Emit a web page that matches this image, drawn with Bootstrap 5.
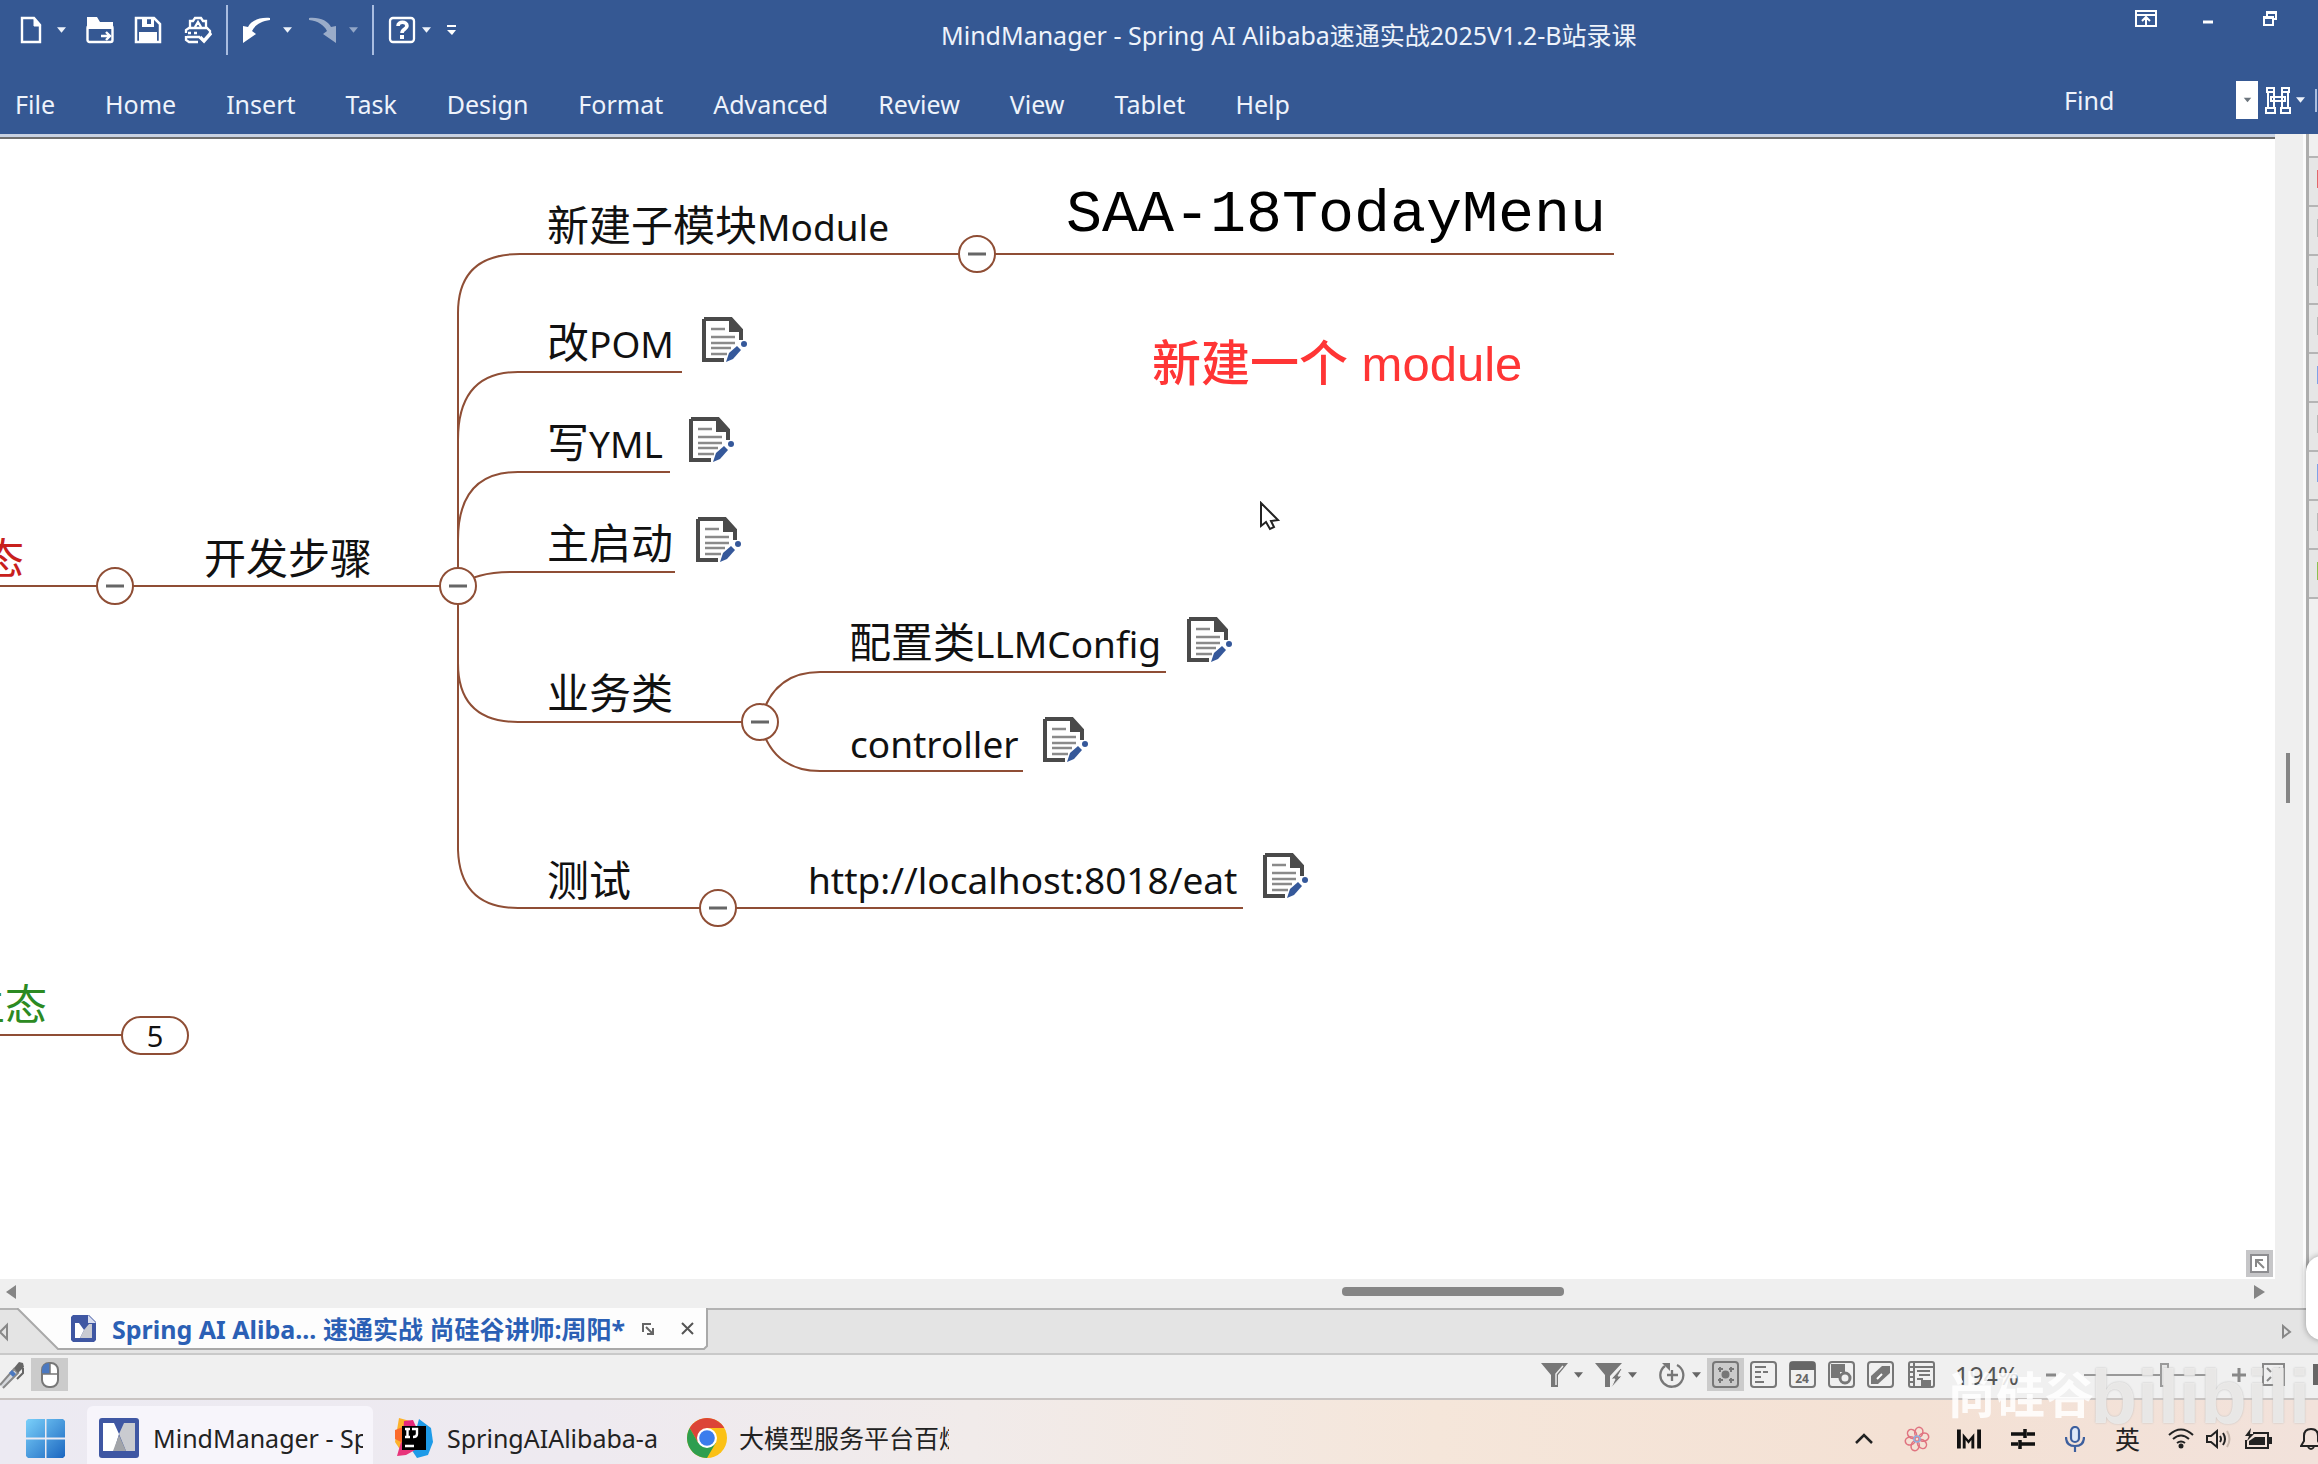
<!DOCTYPE html>
<html lang="zh-CN">
<head>
<meta charset="utf-8">
<meta name="viewport" content="width=device-width, initial-scale=1">
<title>MindManager - Spring AI Alibaba速通实战2025V1.2-B站录课</title>
<link href="https://cdn.jsdelivr.net/npm/bootstrap@5.3.0/dist/css/bootstrap.min.css" rel="stylesheet">
<style>
  :root { --ribbon: #355893; --branch: #8f4e35; }
  body { font-family: "Noto Sans", "Noto Sans CJK SC", sans-serif; font-size: 25px; line-height: 32px; color: #222; background: #f0f0f0; }
  svg { display: block; flex: none; }
  button { font: inherit; color: inherit; background: none; border: 0; padding: 0; }

  /* spacing steps between toolbar items */
  .s6 { margin-left: 6px; } .s12 { margin-left: 12px; } .s14 { margin-left: 14px; } .s16 { margin-left: 16px; }
  .s20 { margin-left: 20px; } .s22 { margin-left: 22px; } .s26 { margin-left: 26px; } .s28 { margin-left: 28px; }
  .s30 { margin-left: 30px; } .s44 { margin-left: 44px; } .s48 { margin-left: 48px; }

  .ribbon { background: var(--ribbon); color: #eef3fb; height: 134px; }
  .titlebar { height: 76px; }
  .quick { height: 60px; padding-left: 17px; }
  .quick button { display: flex; }
  .faded { opacity: .5; }
  .vline { width: 2px; height: 50px; background: #a9bde0; }
  .vline.short { height: 23px; margin: 0 1px 0 10px; }
  .doc-title { padding-top: 19px; padding-left: 485px; }
  .wincontrols { padding-top: 9px; padding-right: 40px; }
  .menubar { height: 56px; }
  .tabs { gap: 50px; padding-left: 15px; }
  .tabs a { color: #eef3fb; text-decoration: none; }
  .findbox { width: 172px; height: 38px; background: transparent; border: 0; color: #eef3fb; padding: 0; }
  .findbox::placeholder { color: #eef3fb; opacity: 1; }
  .finddrop { width: 22px; height: 38px; background: #fff; }

  .work { height: 1174px; }
  .canvas { background: #fff; border-top: 2px solid #6f6f6f; box-shadow: 0 -3px 0 #c9d2e2; margin-top: 3px; }
  .vscroll { width: 28px; background: #efefef; }
  .vthumb { width: 4px; height: 50px; background: #858585; margin: 619px 0 0 11px; }
  .gutter { width: 3px; background: #fbfbfb; }
  .panel-side { width: 12px; border-left: 3px solid #adadad; background: #f0f0f0; padding-top: 22px; }
  .panel-side button { display: block; width: 9px; height: 49px; border-top: 2px solid #b5b5b5; background: #e6e6e6; position: relative; }
  .panel-side button:last-child { border-bottom: 2px solid #b5b5b5; height: 51px; }
  .panel-side button::after { content: ""; position: absolute; right: 0; top: 12px; width: 1px; height: 18px; background: #b9b9b9; }
  .panel-side .c-red::after { background: #e2686a; }
  .panel-side .c-blue::after { background: #7fa3e6; }
  .panel-side .c-green::after { background: #8cc152; }
  .drawer-tab { position: absolute; right: -20px; top: 1256px; width: 32px; height: 84px; border-radius: 16px; background: #fff; box-shadow: 0 0 6px rgba(0,0,0,.35); }
  .hscroll { height: 29px; background: #efefef; padding: 0 38px 4px 6px; }
  .hthumb { height: 9px; width: 222px; border-radius: 4px; background: #868686; margin-left: 1326px; }

  .topic { position: absolute; height: 50px; line-height: 50px; font-size: 37px; white-space: nowrap; color: #111; }
  .topic .zh { font-size: 42px; }
  .code-topic { font-family: "Liberation Mono", monospace; font-size: 60px; color: #000; height: 70px; line-height: 70px; }
  .callout-text { font-family: "Liberation Sans", "Noto Sans CJK SC", sans-serif; font-size: 49px; font-weight: 500; color: #ff3535; height: 60px; line-height: 60px; }
  .note { position: absolute; width: 46px; height: 46px; }
  .count { position: absolute; width: 68px; height: 39px; border: 2px solid var(--branch); border-radius: 20px; background: #fff; font-size: 29px; line-height: 32px; text-align: center; color: #111; left: 121px; top: 877px; }
  .red { color: #c8201c; } .green { color: #2c8a22; }
  .t-module { left: 547px; top: 61px; } .t-saa { left: 1066px; top: 41px; }
  .t-pom { left: 547px; top: 178px; } .t-yml { left: 547px; top: 278px; } .t-main { left: 547px; top: 379px; }
  .t-steps { left: 204px; top: 394px; } .t-state { left: -18px; top: 394px; }
  .t-biz { left: 547px; top: 529px; } .t-config { left: 849px; top: 478px; } .t-ctrl { left: 850px; top: 580px; }
  .t-test { left: 547px; top: 716px; } .t-url { left: 808px; top: 716px; } .t-eco { left: -37px; top: 840px; }
  .t-callout { left: 1152px; top: 195px; }
  .n-pom { left: 702px; top: 178px; } .n-yml { left: 689px; top: 278px; } .n-main { left: 696px; top: 378px; }
  .n-config { left: 1187px; top: 478px; } .n-ctrl { left: 1043px; top: 578px; } .n-url { left: 1263px; top: 714px; }
  .pointer { position: absolute; left: 1259px; top: 362px; }
  .overview { position: absolute; right: 2px; bottom: 2px; }

  .doctabs { height: 47px; background: #e4e4e4; border-top: 2px solid #b3b3b3; border-bottom: 2px solid #c9c9c9; }
  .doctab { width: 690px; height: 41px; position: relative; margin-top: -2px; padding-left: 54px; color: #2b60b5; }
  .doctab > * { position: relative; }
  .doctab .tabshape { position: absolute; left: 0; top: 0; }
  .doctab strong { width: 529px; }
  .tab-next { margin-right: 26px; }

  .status { height: 45px; background: #f0f0f0; border-bottom: 2px solid #c9c4c2; }
  .status-tools { color: #666; }
  .tool-on { width: 37px; height: 33px; background: #cbcbcb; }
  .zoomval { width: 71px; color: #555; }
  .edge-tool { width: 5px; height: 21px; background: #666; }
  .zoomrange { width: 126px; height: 24px; appearance: none; background: linear-gradient(#999,#999) center/100% 2px no-repeat; }
  .zoomrange::-webkit-slider-thumb { appearance: none; width: 9px; height: 24px; background: #e8e8e8; border: 2px solid #9a9a9a; }

  .taskbar { height: 64px; background: linear-gradient(90deg, #eceaf2 0%, #eeeaf0 25%, #f1ebea 42%, #f5e6da 62%, #f4e1d4 82%, #f2e2db 100%); padding-left: 26px; }
  .start { margin-top: 13px; }
  .task { height: 58px; margin-top: 6px; padding-top: 6px; }
  .task span { width: 210px; overflow: hidden; white-space: nowrap; text-align: left; }
  .task.active { width: 286px; padding-left: 12px; background: #f7f5fb; border-radius: 6px 6px 0 0; }
  .tray { padding-top: 13px; }
  .bell { width: 18px; overflow: hidden; }
  .wm { position: absolute; font-weight: 700; pointer-events: none; white-space: nowrap; }
  .wm-school { right: 224px; bottom: 40px; font-size: 49px; line-height: 60px; color: rgba(255,255,255,.85); }
  .wm-site { right: 8px; bottom: 25px; font: 700 76px/84px "Liberation Sans", sans-serif; color: rgba(240,239,237,.85); text-shadow: 0 0 2px #bbb; }
</style>
<script src="https://cdn.jsdelivr.net/npm/bootstrap@5.3.0/dist/js/bootstrap.bundle.min.js"></script>
</head>
<body class="overflow-hidden position-relative">
<svg width="0" height="0" class="position-absolute" aria-hidden="true">
  <defs>
    <symbol id="caret" viewBox="0 0 10 8"><path d="M0 1h10L5 7z" fill="currentColor"/></symbol>
    <symbol id="noteicon" viewBox="0 0 46 46">
      <path d="M2 2h27l10 11v10M22 43H2V2" fill="none" stroke="#4a4a4a" stroke-width="4"/>
      <path d="M27 2v13h13z" fill="#4a4a4a"/>
      <path d="M9 12h14M9 20h24M9 26h24M9 31h20M9 37h16" stroke="#8a8a8a" stroke-width="2.6"/>
      <path d="M24 45l3-9 8-7 4 4-8 9z" fill="#35589a"/><circle cx="42" cy="27" r="3" fill="#35589a"/>
    </symbol>
  </defs>
</svg>

<header class="ribbon">
  <div class="titlebar d-flex">
    <div class="quick d-flex align-items-center">
      <button aria-label="New"><svg width="28" height="28" viewBox="0 0 28 28" fill="none" stroke="#fff" stroke-width="2.4"><path d="M5 2h12l6 7v17H5z"/><path d="M17 2v8h7z" fill="#fff" stroke-width="1"/></svg></button>
      <button aria-label="New options" class="s12"><svg width="9" height="8"><use href="#caret"/></svg></button>
      <button aria-label="Open" class="s20"><svg width="28" height="28" viewBox="0 0 28 28"><path d="M1 1h10l3 5h13v7H1z" fill="#fff"/><rect x="1.5" y="10" width="25" height="16" rx="2" fill="none" stroke="#fff" stroke-width="2.4"/><path d="M15 20h9M20 16l4 4-4 4" fill="none" stroke="#fff" stroke-width="2.4"/></svg></button>
      <button aria-label="Save" class="s20"><svg width="28" height="28" viewBox="0 0 28 28"><path d="M2 2h18l6 6v18H2z" fill="none" stroke="#fff" stroke-width="2.5"/><path d="M8 2h5v6h4V2h3v9H8zM5 16h18v9H5z" fill="#fff"/></svg></button>
      <button aria-label="Print" class="s22"><svg width="28" height="28" viewBox="0 0 28 28" fill="none" stroke="#fff" stroke-width="2.3"><path d="M6 12V5h3l2-3h6l2 3h3v7M11 11l3-5 3 5M2 17v-3l3-2h18l3 3v2M2 20v4l3 2h9M4 17h3M10 17h3M3 21h13"/><path d="M16 21l4 4 7-8" stroke-width="3.5"/></svg></button>
      <span class="vline s14"></span>
      <button aria-label="Undo" class="s14"><svg width="29" height="28" viewBox="0 0 29 28"><path d="M28 2C17 1 9 5 6 11L1 10v17l13-9-4-3C13 9 19 5 28 4z" fill="#fff"/></svg></button>
      <button aria-label="Undo options" class="s12"><svg width="9" height="8"><use href="#caret"/></svg></button>
      <button aria-label="Redo" class="s16 faded"><svg width="29" height="28" viewBox="0 0 29 28"><path d="M1 2c11-1 19 3 22 9l5-1v17l-13-9 4-3C16 9 10 5 1 4z" fill="#fff"/></svg></button>
      <button aria-label="Redo options" class="s12 faded"><svg width="9" height="8"><use href="#caret"/></svg></button>
      <span class="vline s14"></span>
      <button aria-label="Help" class="s14"><svg width="28" height="28" viewBox="0 0 28 28"><rect x="2" y="2" width="24" height="24" rx="3" fill="none" stroke="#fff" stroke-width="2.3"/><path d="M10 10c0-5 9-5 9 0 0 3-5 3-5 7" fill="none" stroke="#fff" stroke-width="3.6"/><rect x="12" y="19" width="4" height="4" fill="#fff"/></svg></button>
      <button aria-label="Help options" class="s6"><svg width="9" height="8"><use href="#caret"/></svg></button>
      <button aria-label="Customize toolbar" class="s16"><svg width="9" height="12" viewBox="0 0 9 12" fill="#fff"><path d="M0 1h9v2H0zM0 6h9l-4 5z"/></svg></button>
    </div>
    <div class="doc-title text-nowrap">MindManager - Spring AI Alibaba速通实战2025V1.2-B站录课</div>
    <div class="wincontrols d-flex ms-auto align-items-start">
      <button aria-label="Ribbon display"><svg width="24" height="20" viewBox="0 0 24 20" fill="none" stroke="#fff" stroke-width="2"><path d="M2 2h20v15H2zM2 6h20M12 16V8M8 12l4-4 4 4"/></svg></button>
      <button aria-label="Minimize" class="s44"><svg width="12" height="20"><path d="M1 13h10" stroke="#fff" stroke-width="3"/></svg></button>
      <button aria-label="Restore" class="s48"><svg width="16" height="20" viewBox="0 0 16 20" fill="none" stroke="#fff" stroke-width="2"><path d="M2 8h9v8H2zM2 9h9M5 8V3h9v7h-3M5 4h9"/></svg></button>
    </div>
  </div>
  <nav class="menubar d-flex align-items-center justify-content-between">
    <div class="tabs d-flex">
      <a href="#">File</a><a href="#">Home</a><a href="#">Insert</a><a href="#">Task</a><a href="#">Design</a><a href="#">Format</a><a href="#">Advanced</a><a href="#">Review</a><a href="#">View</a><a href="#">Tablet</a><a href="#">Help</a>
    </div>
    <div class="d-flex align-items-center pb-2">
      <input class="findbox" type="text" placeholder="Find" aria-label="Find">
      <button class="finddrop d-flex align-items-center justify-content-center text-secondary" aria-label="Find history"><svg width="9" height="6"><use href="#caret"/></svg></button>
      <button aria-label="Search" class="s6"><svg width="28" height="28" viewBox="0 0 28 28" fill="none" stroke="#fff" stroke-width="2"><path d="M3 2h7v4H3zM18 2h7v4h-7zM4 7v14M10 7v14M18 7v14M24 7v14M2 22h9v5H2zM17 22h9v5h-9zM7 11h14v4H7z"/></svg></button>
      <button aria-label="Search options" class="ms-1"><svg width="9" height="8"><use href="#caret"/></svg></button>
      <span class="vline short"></span>
    </div>
  </nav>
</header>

<div class="work d-flex">
  <div class="d-flex flex-column flex-grow-1">
    <div class="d-flex flex-grow-1">
      <main class="canvas position-relative flex-grow-1 overflow-hidden">
        <svg class="position-absolute top-0 start-0" width="1700" height="1139" viewBox="0 139 1700 1139" fill="none" stroke="#8f4e35" stroke-width="2">
          <path d="M0 586H458M458 586V313Q458 254 520 254H1614M458 440Q458 372 518 372H682M458 540Q458 472 518 472H670M458 586Q476 572 512 572H675M458 586V663Q458 722 518 722H760M458 650V850Q460 908 518 908H718M760 722Q772 672 820 672H1166M760 722Q772 771 820 771H1023M718 908H1243M0 1035H122"/>
          <g fill="#fff"><circle cx="977" cy="254" r="18"/><circle cx="115" cy="586" r="18"/><circle cx="458" cy="586" r="18"/><circle cx="760" cy="722" r="18"/><circle cx="718" cy="908" r="18"/></g>
          <path stroke="#666" stroke-width="3" d="M968 254h18M106 586h18M449 586h18M751 722h18M709 908h18"/>
        </svg>
        <div class="topic t-module"><span class="zh">新建子模块</span>Module</div>
        <div class="topic code-topic t-saa">SAA-18TodayMenu</div>
        <div class="topic t-pom"><span class="zh">改</span>POM</div>
        <div class="topic t-yml"><span class="zh">写</span>YML</div>
        <div class="topic t-main"><span class="zh">主启动</span></div>
        <div class="topic t-steps"><span class="zh">开发步骤</span></div>
        <div class="topic t-state red"><span class="zh">态</span></div>
        <div class="topic t-biz"><span class="zh">业务类</span></div>
        <div class="topic t-config"><span class="zh">配置类</span>LLMConfig</div>
        <div class="topic t-ctrl">controller</div>
        <div class="topic t-test"><span class="zh">测试</span></div>
        <div class="topic t-url">http://localhost:8018/eat</div>
        <div class="topic t-eco green"><span class="zh">生态</span></div>
        <button class="count">5</button>
        <div class="topic callout-text t-callout">新建一个 module</div>
        <svg class="note n-pom"><use href="#noteicon"/></svg>
        <svg class="note n-yml"><use href="#noteicon"/></svg>
        <svg class="note n-main"><use href="#noteicon"/></svg>
        <svg class="note n-config"><use href="#noteicon"/></svg>
        <svg class="note n-ctrl"><use href="#noteicon"/></svg>
        <svg class="note n-url"><use href="#noteicon"/></svg>
        <svg class="pointer" width="22" height="32" viewBox="0 0 22 32"><path d="M2 2v23l5-4 4 7 4-2-3-6 7-1z" fill="#fff" stroke="#222" stroke-width="2"/></svg>
        <button class="overview" aria-label="Overview"><svg width="27" height="27" viewBox="0 0 27 27" fill="none"><path d="M0 0h27v27H0z" fill="#c6c6c8"/><path d="M5 5h17v17H5z" fill="#fff" stroke="#8d8d90" stroke-width="2"/><path d="M10 17v-7h7M10 10l8 8" stroke="#888" stroke-width="2"/></svg></button>
      </main>
      <div class="vscroll"><div class="vthumb"></div></div>
    </div>
    <div class="hscroll d-flex align-items-center">
      <svg width="10" height="14"><path d="M10 0v14L0 7z" fill="#858585"/></svg>
      <div class="hthumb"></div>
      <svg class="ms-auto" width="11" height="14"><path d="M0 0v14l11-7z" fill="#858585"/></svg>
    </div>
  </div>
  <div class="gutter"></div>
  <aside class="panel-side">
    <button class="c-red" aria-label="Panel 1"></button><button aria-label="Panel 2"></button><button aria-label="Panel 3"></button><button aria-label="Panel 4"></button><button class="c-blue" aria-label="Panel 5"></button><button aria-label="Panel 6"></button><button class="c-blue" aria-label="Panel 7"></button><button aria-label="Panel 8"></button><button class="c-green" aria-label="Panel 9"></button>
  </aside>
</div>

<div class="doctabs d-flex">
  <svg width="17" height="43" fill="none" stroke="#888" stroke-width="2"><path d="M7 15v14L0 22z"/></svg>
  <div class="doctab d-flex align-items-center">
    <svg class="tabshape" width="692" height="43"><path d="M0 0H690V38L687 41H41Z" fill="#fdfdfd"/><path d="M0 0L41 41H687L690 38V0" fill="none" stroke="#a9a9a9" stroke-width="2"/></svg>
    <svg width="25" height="27" viewBox="0 0 25 27"><path d="M2 0h16l7 7v18l-2 2H2l-2-2V2z" fill="#3f57a3"/><path d="M17 0v8h8z" fill="#d9def0"/><path d="M4 8h4l5 7-4 8H4z" fill="#fff"/><path d="M21 9h-3l-5 6-4 8h12z" fill="#c9cbd2"/></svg>
    <strong class="text-nowrap s16">Spring AI Aliba... 速通实战 尚硅谷讲师:周阳*</strong>
    <button aria-label="Float"><svg width="14" height="14" fill="none" stroke="#666" stroke-width="2"><path d="M2 10V2h8M5 5l7 7M12 6v6H6"/></svg></button>
    <button aria-label="Close" class="s26"><svg width="13" height="13" stroke="#555" stroke-width="2"><path d="M1 1l11 11M12 1L1 12"/></svg></button>
  </div>
  <svg class="tab-next ms-auto align-self-center" width="10" height="15" fill="none" stroke="#888" stroke-width="2"><path d="M1 2v11l7-5z"/></svg>
</div>

<div class="status d-flex align-items-center pb-1">
  <svg width="25" height="28" viewBox="0 0 25 28"><path d="M0 24L14 8l4 4L3 27" fill="#d5d8dc" stroke="#888" stroke-width="2"/><path d="M14 7l5-6 4 1 1 4-6 6z" fill="#666"/><path d="M9 12l3-3 4 4-3 3z" fill="#4a78c0"/><path d="M23 7v5l-6 6" fill="none" stroke="#666" stroke-width="2"/></svg>
  <button class="tool-on d-flex justify-content-center align-items-center s6" aria-label="Pointer mode"><svg width="18" height="26" viewBox="0 0 18 26"><rect x="1" y="1" width="16" height="24" rx="7" fill="#fff" stroke="#777" stroke-width="2"/><path d="M9 1v11H1V8q0-7 8-7z" fill="#4a78c0"/><path d="M9 1v11M1 12h16" stroke="#777" stroke-width="1.5"/></svg></button>
  <div class="status-tools d-flex align-items-center ms-auto">
    <button aria-label="Filter"><svg width="27" height="26" viewBox="0 0 27 26"><path d="M0 1h27L17 13v12h-7V13z" fill="#777"/><path d="M22 4l-7 8v11" stroke="#eee" stroke-width="1.5" fill="none"/></svg></button>
    <button aria-label="Filter options" class="s6"><svg width="9" height="8"><use href="#caret"/></svg></button>
    <button aria-label="Power filter" class="s12"><svg width="27" height="26" viewBox="0 0 27 26"><path d="M0 1h27L15 14v11h-5V13z" fill="#777"/><path d="M26 6L16 17h4l-4 9 11-12h-4l4-7z" fill="#777" stroke="#f0f0f0"/></svg></button>
    <button aria-label="Power filter options" class="s6"><svg width="9" height="8"><use href="#caret"/></svg></button>
    <button aria-label="Refresh" class="s22"><svg width="27" height="28" viewBox="0 0 27 28" fill="none" stroke="#777" stroke-width="2.3"><path d="M6 5a11.500 11.500 0 1 0 12-1M13 9v11M8 14h11"/><path d="M3 2h8v8z" fill="#777" stroke="none"/></svg></button>
    <button aria-label="Refresh options" class="s6"><svg width="9" height="8"><use href="#caret"/></svg></button>
    <button class="tool-on d-flex justify-content-center align-items-center s6" aria-label="Map view"><svg width="27" height="27" viewBox="0 0 27 27" fill="none" stroke="#777" stroke-width="2"><rect x="1" y="1" width="25" height="25" rx="3"/><circle cx="13.5" cy="13.5" r="3" fill="#777"/><path d="M6 8h5M8 6v5M17 8h5M19 6v5M6 19h5M8 17v5M17 19h5M19 17v5"/></svg></button>
    <button aria-label="Outline view" class="s6"><svg width="27" height="27" viewBox="0 0 27 27" fill="none" stroke="#777" stroke-width="2"><rect x="1" y="1" width="25" height="25" rx="3"/><path d="M5 6h11M5 11h6M13 11h5M5 16h6M5 21h9"/></svg></button>
    <button aria-label="Schedule view" class="s12"><svg width="27" height="27" viewBox="0 0 27 27"><rect x="1" y="1" width="25" height="25" rx="3" fill="none" stroke="#777" stroke-width="2"/><path d="M1 1h25v8H1z" fill="#666"/><text x="13" y="22" font-size="12" font-weight="700" text-anchor="middle" fill="#666">24</text></svg></button>
    <button aria-label="Icon view" class="s12"><svg width="27" height="27" viewBox="0 0 27 27" fill="none" stroke="#777" stroke-width="2"><rect x="1" y="1" width="25" height="25" rx="3"/><path d="M4 4h12v6h-5v6H4z" fill="#777"/><circle cx="17" cy="17" r="5" stroke-width="3"/></svg></button>
    <button aria-label="Tag view" class="s12"><svg width="27" height="27" viewBox="0 0 27 27"><rect x="1" y="1" width="25" height="25" rx="3" fill="none" stroke="#777" stroke-width="2"/><path d="M4 15L15 5h8v7L11 23H4z" fill="#777"/><path d="M10 18l5-5" stroke="#fff" stroke-width="2"/></svg></button>
    <button aria-label="Gantt view" class="s14"><svg width="27" height="27" viewBox="0 0 27 27" fill="none" stroke="#777" stroke-width="2"><rect x="1" y="1" width="25" height="25" rx="2"/><path d="M1 6h25M6 1v25M9 10h13M11 14h11M9 18h6M1 11h5M1 16h5M1 21h5"/><path d="M14 25v-5h8v5z" fill="#777"/></svg></button>
    <span class="zoomval s20">194%</span>
    <button aria-label="Zoom out" class="s20"><svg width="10" height="4"><path d="M0 2h10" stroke="#888" stroke-width="3"/></svg></button>
    <input class="zoomrange s28" type="range" aria-label="Zoom" min="0" max="300" value="194">
    <button aria-label="Zoom in" class="s22"><svg width="14" height="14"><path d="M0 7h14M7 0v14" stroke="#888" stroke-width="3"/></svg></button>
    <button aria-label="Fit map" class="s16"><svg width="23" height="23" viewBox="0 0 23 23" fill="none" stroke="#888" stroke-width="2"><path d="M1 1h21v21H1zM5 5l4 4M18 5l-4 4M5 18l4-4M18 18l-4-4"/></svg></button>
    <span class="edge-tool s28"></span>
  </div>
</div>

<footer class="taskbar d-flex position-relative">
  <button class="start" aria-label="Start"><svg width="39" height="39" viewBox="0 0 39 39"><defs><linearGradient id="w" x2="1" y2="1"><stop stop-color="#7ad0fa"/><stop offset="1" stop-color="#1b66c0"/></linearGradient></defs><path fill="url(#w)" d="M2 0h17v18.500H0V2zM20.500 0H37l2 2v16.500H20.500zM0 20.500h19V39H2l-2-2zM20.500 20.500H39V37l-2 2H20.500z"/></svg></button>
  <button class="task active d-flex align-items-center s22"><svg width="40" height="40" viewBox="0 0 40 40"><rect width="40" height="40" rx="3" fill="#3f57a3"/><path d="M4 5h11l5 11-5 17H4z" fill="#fff"/><path d="M36 5H25l-5 11 7 17h9z" fill="#c9cbd0"/><path d="M20 17l7 16H14z" fill="#a2a4a8"/></svg><span class="s14">MindManager - Sp</span></button>
  <button class="task d-flex align-items-center s22"><svg width="38" height="40" viewBox="0 0 38 40"><path d="M4 0l11 3 5 17L6 33 0 24z" fill="#fdb22b"/><path d="M0 12l8-3v16l-8-4z" fill="#fb6a2b"/><path d="M9 3l9-1 4 9-14 6z" fill="#e5287b"/><path d="M24 1l12 9 2 14-5 13-11 3-6-9z" fill="#1e9be8"/><path d="M2 38l4-14 14 8-9 5z" fill="#e8347a"/><rect x="7" y="8" width="24" height="24" fill="#000"/><path d="M10 11h5M12.500 11v8M10 19h5M17 11h5v5q0 3-4 3M10 28h9" stroke="#fff" stroke-width="2.400" fill="none"/></svg><span class="s14">SpringAIAlibaba-atguigu</span></button>
  <button class="task d-flex align-items-center s30"><svg width="40" height="40" viewBox="0 0 40 40"><circle cx="20" cy="20" r="20" fill="#fbc116"/><path d="M2.700 10A20 20 0 0 1 37.300 10H20L11.300 25z" fill="#dc4437"/><path d="M2.700 10A20 20 0 0 0 20 40l8.700-15H11.300z" fill="#2e9e4f"/><circle cx="20" cy="20" r="10" fill="#fff"/><circle cx="20" cy="20" r="7.800" fill="#3b7ded"/></svg><span class="s12">大模型服务平台百炼控制台</span></button>
  <div class="tray d-flex align-items-center ms-auto">
    <button aria-label="Show hidden icons"><svg width="18" height="12" fill="none" stroke="#222" stroke-width="2.5"><path d="M1 10l8-8 8 8"/></svg></button>
    <button aria-label="Assistant" class="s30"><svg width="28" height="26" viewBox="-14 -13 28 26" fill="none" stroke="#e07480" stroke-width="1.6"><ellipse cx="0" cy="-7" rx="4" ry="5" transform="rotate(15)"/><ellipse cx="0" cy="-7" rx="4" ry="5" transform="rotate(75)"/><ellipse cx="0" cy="-7" rx="4" ry="5" transform="rotate(135)"/><ellipse cx="0" cy="-7" rx="4" ry="5" transform="rotate(195)"/><ellipse cx="0" cy="-7" rx="4" ry="5" transform="rotate(255)"/><ellipse cx="0" cy="-7" rx="4" ry="5" transform="rotate(315)"/><circle r="3" stroke="#8fb0e0"/></svg></button>
    <button aria-label="Monitor" class="s26"><svg width="24" height="20" viewBox="0 0 25 20"><path d="M0 0h4v20H0zM6 20V4l6 7 6-7v16h-3v-9l-3 4-3-4v9zM21 0h4v20h-4z" fill="#111"/></svg></button>
    <button aria-label="Settings" class="s30"><svg width="24" height="20" viewBox="0 0 24 20" stroke="#111" stroke-width="3.5"><path d="M0 5h13M16 5h8M14 0v9M0 15h7M10 15h14M9 11v9"/></svg></button>
    <button aria-label="Microphone" class="s30"><svg width="20" height="26" viewBox="0 0 20 26" fill="none" stroke="#3d5f9e" stroke-width="2.2"><rect x="6" y="1" width="8" height="15" rx="4" fill="#dfe8f8"/><path d="M1 11q0 9 9 9t9-9M10 20v6"/></svg></button>
    <button class="s30">英</button>
    <button aria-label="Network" class="s28"><svg width="26" height="21" viewBox="0 0 26 21" fill="none" stroke="#222" stroke-width="2"><path d="M1 7q12-11 24 0M5 11q8-7 16 0M9 15q4-3 8 0"/><circle cx="13" cy="18" r="1.5" fill="#222"/></svg></button>
    <button aria-label="Volume" class="s12"><svg width="25" height="20" viewBox="0 0 25 20" fill="none" stroke="#222" stroke-width="2"><path d="M1 7h4l6-5v16l-6-5H1zM14 7q2 3 0 6M17 4q4 6 0 12"/><path d="M21 2q5 8 0 16" stroke="#c9b9ae"/></svg></button>
    <button aria-label="Battery" class="s14"><svg width="27" height="22" viewBox="0 0 27 22"><path d="M8 5h15v15H1v-8" fill="none" stroke="#222" stroke-width="2"/><path d="M10 9h10v8H4v-4zM24 9h3v7h-3zM6 0L0 8h4l-2 5 7-7H5z" fill="#222"/></svg></button>
    <button aria-label="Notifications" class="bell s28"><svg width="22" height="24" viewBox="0 0 22 24" fill="none" stroke="#222" stroke-width="2"><path d="M1 19l3-5V9q0-7 7-7t7 7v5l3 5zM8 20q3 4 6 0"/></svg></button>
  </div>
  <div class="wm wm-school">尚硅谷</div>
  <div class="wm wm-site">bilibili</div>
</footer>
<div class="drawer-tab"></div>
</body>
</html>
